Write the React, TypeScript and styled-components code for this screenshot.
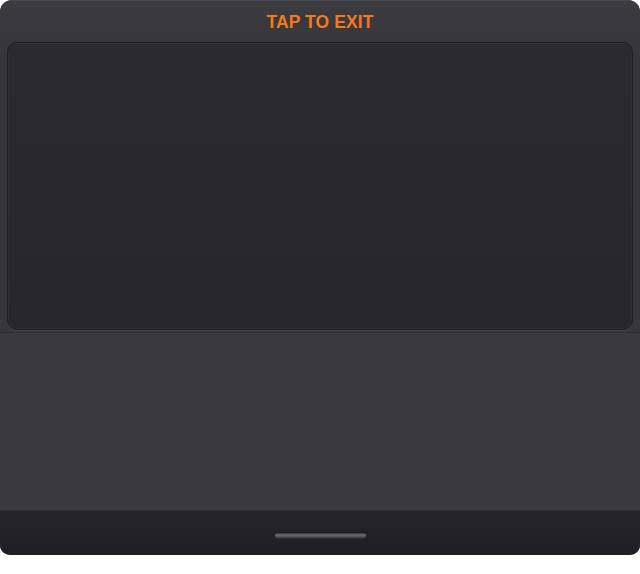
import React from "react";
import styled, { createGlobalStyle } from "styled-components";

const Global = createGlobalStyle`
  html, body { margin: 0; padding: 0; background: #ffffff; }
  body { font-family: "Liberation Sans", Arial, sans-serif; }
`;

const Device = styled.div`
  width: 640px;
  height: 555px;
  display: flex;
  flex-direction: column;
  background: #38373c;
  border-radius: 12px 12px 10px 10px;
  overflow: hidden;
`;

const Header = styled.div`
  height: 42px;
  display: flex;
  align-items: center;
  justify-content: center;
  background: linear-gradient(#3c3b40, #37363b);
  border-top: 1px solid #48474c;
  box-sizing: border-box;
`;

const ExitLabel = styled.span`
  color: #f5781a;
  font-weight: 700;
  font-size: 17.5px;
  letter-spacing: 0.1px;
  margin-top: 1px;
`;

const ScreenWrap = styled.div`
  padding: 0 7px 0 7px;
  background: #37363b;
`;

const Screen = styled.div`
  height: 288px;
  background: linear-gradient(#2b2a2f, #28272c);
  border-radius: 10px;
  border: 1px solid #1f1e22;
  box-shadow: inset 0 0 0 1px #2f2e33, 0 1px 0 #434247;
  box-sizing: border-box;
`;

const Body = styled.div`
  flex: 1;
  margin-top: 2px;
  background: #3a393e;
  border-top: 1px solid #2e2d32;
`;

const Footer = styled.div`
  height: 45px;
  display: flex;
  justify-content: center;
  padding-top: 22px;
  box-sizing: border-box;
  background: linear-gradient(#252429, #1f1e23);
  border-top: 1px solid #2a292e;
`;

const Handle = styled.div`
  width: 91px;
  height: 5px;
  border-radius: 3px;
  background: linear-gradient(#3a393e, #6a696e 45%, #3c3b40);
  box-shadow: 0 1px 0 #2c2b30, 0 -1px 0 #1a191d;
`;

export default function App() {
  return (
    <>
      <Global />
      <Device>
        <Header>
          <ExitLabel>TAP TO EXIT</ExitLabel>
        </Header>
        <ScreenWrap>
          <Screen />
        </ScreenWrap>
        <Body />
        <Footer>
          <Handle />
        </Footer>
      </Device>
    </>
  );
}
